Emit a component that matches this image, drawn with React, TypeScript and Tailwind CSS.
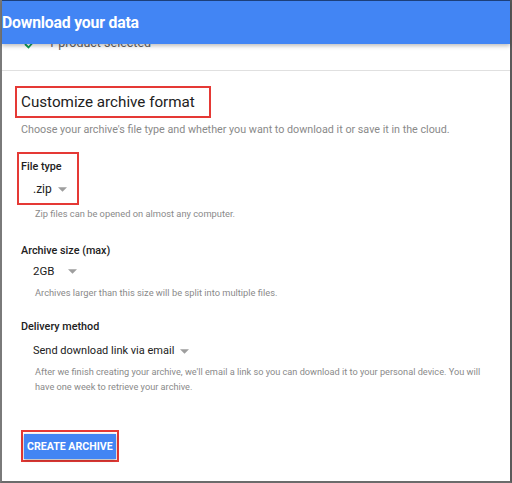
export default function App() {
  const caret = (
    <svg width="9" height="5" viewBox="0 0 10 5" className="ml-[6px] inline-block">
      <path d="M0 0 L10 0 L5 5 Z" fill="#9e9e9e" />
    </svg>
  );

  return (
    <div
      className="relative h-[483px] w-[512px] overflow-hidden bg-white"
      style={{ fontFamily: "Roboto, 'Liberation Sans', sans-serif" }}
    >
      <div className="flex h-full flex-col border-b-2 border-l-2 border-r-2 border-b-[#6b6b6b] border-l-[#7a7a7a] border-r-[#5a5a5a]">
        <header className="relative z-10 flex h-[44px] shrink-0 items-center border-t border-[#1c3f7a] bg-[#4285f4] shadow-[0_2px_4px_rgba(0,0,0,0.25)]">
          <h1 className="text-[15.8px] font-bold tracking-[-0.2px] text-white">Download your data</h1>
        </header>

        <div className="-mt-[20px] flex h-[47px] shrink-0 items-start gap-3 border-b border-[#e0e0e0] pl-[22px] pt-[11px]">
          <svg width="12" height="10" viewBox="0 0 12 10" className="mt-[4px]">
            <path d="M1 5 L4.5 8.5 L11 1" fill="none" stroke="#0f9d58" strokeWidth="1.8" />
          </svg>
          <span className="text-[12.5px] leading-[16px] text-[#616161]">1 product selected</span>
        </div>

        <main className="flex flex-col pl-[17px] pt-[15px]">
          <div className="-ml-[4px] w-[196px] border-2 border-[#e53935] py-[3px] pl-[4px]">
            <h2 className="text-[15.2px] leading-[22px] text-[#212121]">Customize archive format</h2>
          </div>
          <p className="mt-[4px] pl-[2px] text-[10.75px] leading-[16px] text-[#8a8a8a]">
            Choose your archive's file type and whether you want to download it or save it in the cloud.
          </p>

          <div className="-ml-[2px] mt-[14px] flex h-[53px] w-[62px] flex-col border-2 border-[#e53935] pl-[2px] pt-[5px]">
            <div className="text-[10.8px] font-medium leading-[15px] text-[#212121]">File type</div>
            <div className="mt-[7px] flex items-center pl-[12px] text-[12px] leading-[16px] text-[#212121]">
              .zip{caret}
            </div>
          </div>
          <p className="mt-[2px] pl-[16px] text-[9.3px] leading-[14px] text-[#8a8a8a]">
            Zip files can be opened on almost any computer.
          </p>

          <div className="mt-[22px] pl-[2px] text-[10.8px] font-medium leading-[15px] text-[#212121]">Archive size (max)</div>
          <div className="mt-[5px] flex items-center pl-[14px] text-[11.5px] leading-[16px] text-[#212121]">
            2GB<span className="ml-[8px] flex">{caret}</span>
          </div>
          <p className="mt-[7px] pl-[16px] text-[9.3px] leading-[14px] text-[#8a8a8a]">
            Archives larger than this size will be split into multiple files.
          </p>

          <div className="mt-[19px] pl-[2px] text-[10.8px] font-medium leading-[15px] text-[#212121]">Delivery method</div>
          <div className="mt-[9px] flex items-center pl-[14px] text-[11px] leading-[16px] text-[#212121]">
            Send download link via email{caret}
          </div>
          <p className="mt-[5px] w-[476px] pl-[16px] text-[9.2px] leading-[15px] text-[#8a8a8a]">
            After we finish creating your archive, we'll email a link so you can download it to your personal device. You will have one week to retrieve your archive.
          </p>

          <div className="ml-[2px] mt-[36px] self-start border-2 border-[#e53935] p-[1px]">
            <button className="h-[25px] bg-[#4285f4] px-[3px] text-[10.6px] font-bold text-white shadow-[0_1px_3px_rgba(0,0,0,0.35)]">
              CREATE ARCHIVE
            </button>
          </div>
        </main>
      </div>
    </div>
  );
}
